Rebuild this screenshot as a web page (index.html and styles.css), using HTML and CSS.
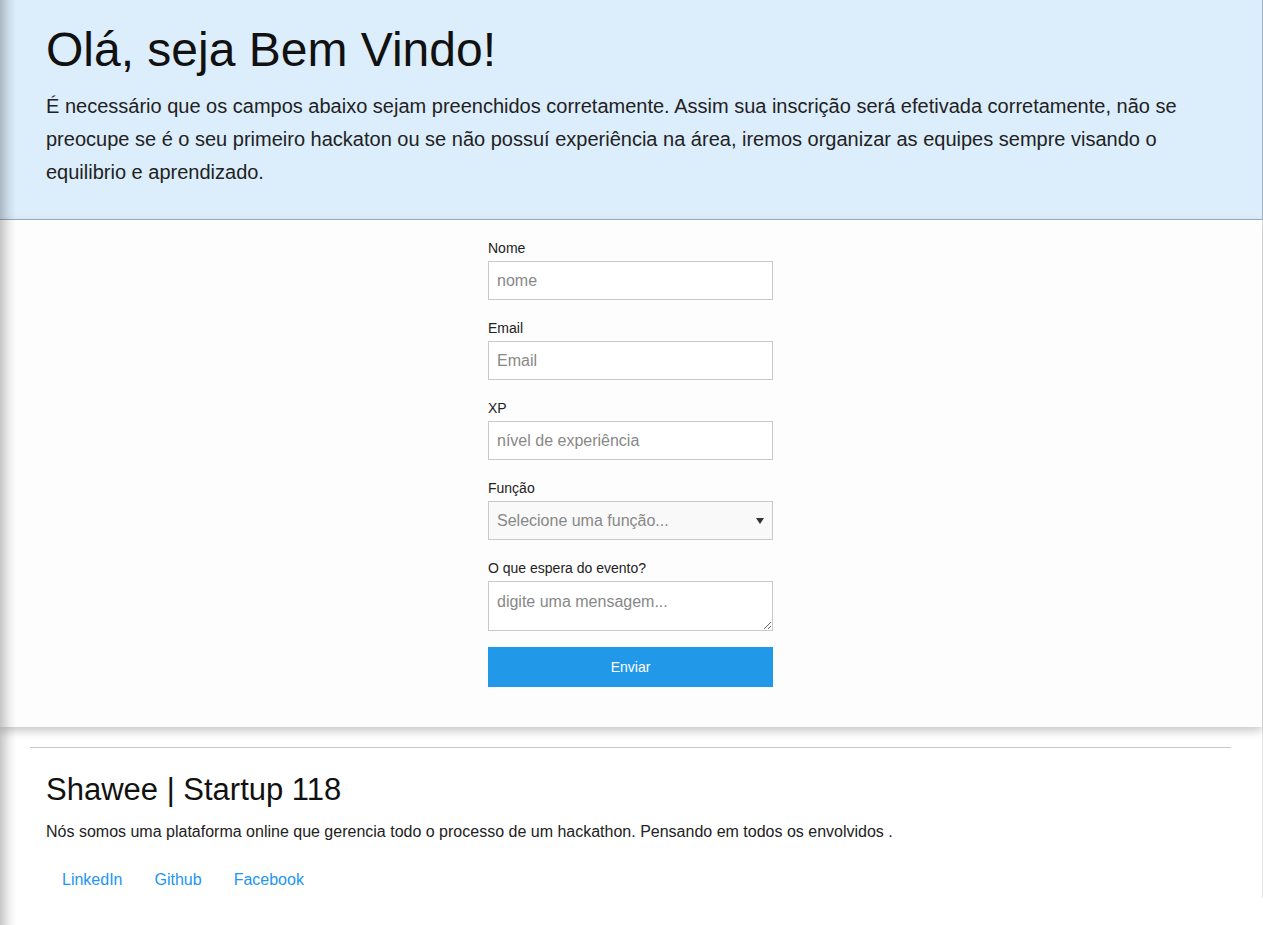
FILE: index.html
```html
<!DOCTYPE html>
<html lang="pt-BR">
<head>
<meta charset="utf-8">
<title>Shawee | Inscrição</title>
<link rel="stylesheet" href="styles.css">
</head>
<body>
<div class="page">
  <header class="hero">
    <h1 class="hero-title">Olá, seja Bem Vindo!</h1>
    <p class="hero-text">É necessário que os campos abaixo sejam preenchidos corretamente. Assim sua inscrição será efetivada corretamente, não se preocupe se é o seu primeiro hackaton ou se não possuí experiência na área, iremos organizar as equipes sempre visando o equilibrio e aprendizado.</p>
  </header>

  <main class="main">
    <form class="form">
      <div class="field">
        <label class="label" for="nome">Nome</label>
        <input class="input" id="nome" type="text" placeholder="nome">
      </div>
      <div class="field">
        <label class="label" for="email">Email</label>
        <input class="input" id="email" type="email" placeholder="Email">
      </div>
      <div class="field">
        <label class="label" for="xp">XP</label>
        <input class="input" id="xp" type="text" placeholder="nível de experiência">
      </div>
      <div class="field">
        <label class="label" for="funcao">Função</label>
        <div class="select-wrap">
          <select class="select" id="funcao">
            <option>Selecione uma função...</option>
          </select>
          <svg class="select-arrow" width="8" height="6" viewBox="0 0 8 6"><path d="M0 0h8L4 6z" fill="#333"/></svg>
        </div>
      </div>
      <div class="field field-last">
        <label class="label" for="msg">O que espera do evento?</label>
        <textarea class="textarea" id="msg" placeholder="digite uma mensagem..."></textarea>
      </div>
      <button class="button" type="button">Enviar</button>
    </form>
  </main>

  <footer class="footer">
    <hr class="rule">
    <div class="footer-body">
      <h2 class="footer-title">Shawee | Startup 118</h2>
      <p class="footer-text">Nós somos uma plataforma online que gerencia todo o processo de um hackathon. Pensando em todos os envolvidos .</p>
      <ul class="links">
        <li><a class="link" href="#">LinkedIn</a></li>
        <li><a class="link" href="#">Github</a></li>
        <li><a class="link" href="#">Facebook</a></li>
      </ul>
    </div>
  </footer>
</div>
</body>
</html>
```

FILE: styles.css
```css
* { box-sizing: border-box; }

html, body {
  margin: 0;
  padding: 0;
  background: #fff;
}

body {
  font-family: "Liberation Sans", Arial, sans-serif;
  color: #222;
  min-height: 925px;
}

body::before {
  content: "";
  position: fixed;
  left: 0;
  top: 0;
  bottom: 0;
  width: 16px;
  background: linear-gradient(to right, rgba(0,0,0,0.22), rgba(0,0,0,0.06) 60%, rgba(0,0,0,0));
  pointer-events: none;
  z-index: 10;
}

.page {
  width: 1263px;
  border-right: 1px solid #e4e4e4;
  padding-bottom: 8px;
}

.hero {
  background: #dcedfb;
  border-bottom: 1px solid #9fb1c2;
  margin-right: -1px;
  border-right: 1px solid #9fb1c2;
  height: 220px;
  padding: 22px 46px 0;
}

.hero-title {
  margin: 0;
  font-size: 48px;
  line-height: 55px;
  font-weight: 400;
  color: #111;
}

.hero-text {
  margin: 13px 0 0;
  font-size: 20px;
  line-height: 33px;
  color: #222;
}

.main {
  position: relative;
  z-index: 1;
  background: #fdfdfd;
  padding: 18px 1px 40px 0;
  box-shadow: 0 4px 9px rgba(0,0,0,0.22);
}

.form {
  width: 285px;
  margin: 0 auto;
}

.field {
  display: flex;
  flex-direction: column;
  gap: 3px;
  margin-bottom: 18px;
}

.field-last { margin-bottom: 16px; }

.label {
  font-size: 14px;
  line-height: 20px;
  color: #222;
}

.input, .select, .textarea {
  font-family: "Liberation Sans", Arial, sans-serif;
  font-size: 16px;
  color: #333;
  border: 1px solid #c9c9c9;
  border-radius: 0;
  width: 100%;
  margin: 0;
  outline: none;
}

.input {
  height: 39px;
  padding: 0 8px;
  background: #fff;
}

.input::placeholder, .textarea::placeholder { color: #888; }

.select-wrap { position: relative; }

.select {
  appearance: none;
  -webkit-appearance: none;
  height: 39px;
  padding: 0 8px;
  background: #f9f9f9;
  color: #888;
  display: block;
}

.select-arrow {
  position: absolute;
  right: 9px;
  top: 17px;
  pointer-events: none;
}

.textarea {
  display: block;
  height: 50px;
  padding: 11px 8px;
  resize: vertical;
  background: #fff;
  line-height: 18px;
}

.button {
  display: block;
  width: 100%;
  height: 40px;
  border: 0;
  border-radius: 0;
  background: #2299e8;
  color: #fff;
  font-family: "Liberation Sans", Arial, sans-serif;
  font-size: 14px;
  cursor: pointer;
}

.footer {
  padding: 20px 31px 0 30px;
}

.rule {
  margin: 0;
  border: 0;
  border-top: 1px solid #c8c8c8;
}

.footer-body { padding: 0 16px; }

.footer-title {
  margin: 24px 0 0;
  font-size: 31px;
  line-height: 36px;
  font-weight: 400;
  color: #111;
}

.footer-text {
  margin: 14px 0 0;
  font-size: 16px;
  line-height: 20px;
  color: #222;
}

.links {
  list-style: none;
  margin: 28px 0 0 16px;
  padding: 0;
  display: flex;
  gap: 32px;
}

.link {
  font-size: 16px;
  line-height: 20px;
  color: #2196f3;
  text-decoration: none;
}
```
